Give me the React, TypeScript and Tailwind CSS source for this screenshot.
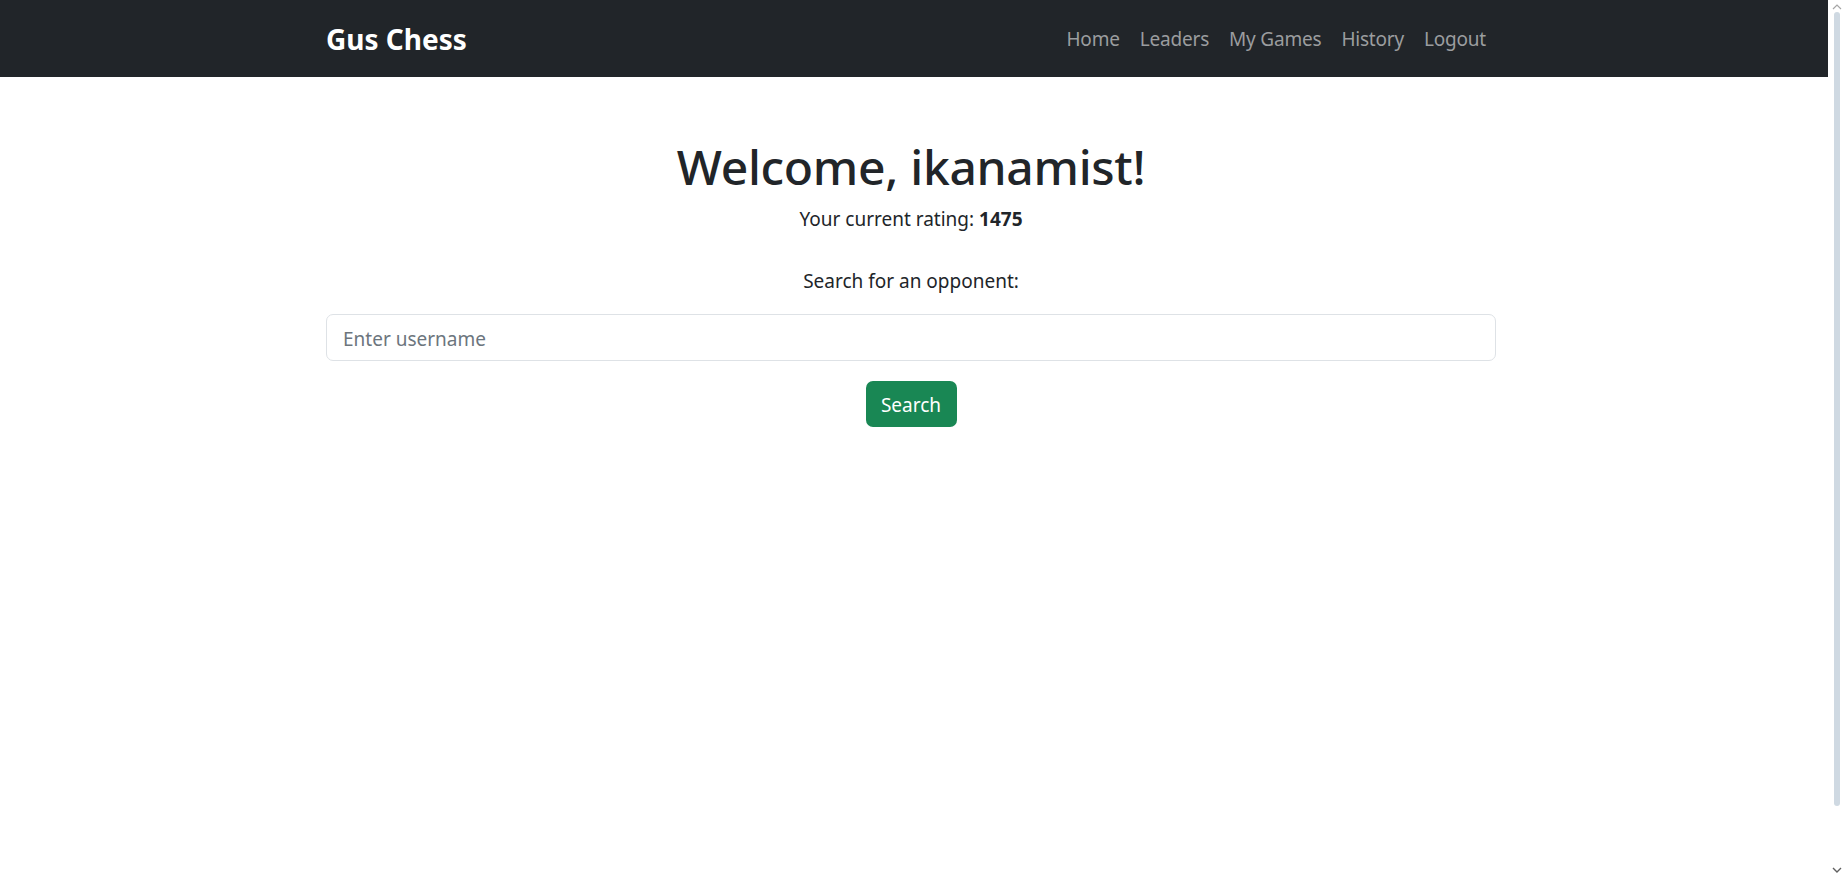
import React from "react";

const font = { fontFamily: '"Noto Sans", "Open Sans", Arial, sans-serif' };

export default function App() {
  const links = ["Home", "Leaders", "My Games", "History", "Logout"];
  return (
    <div className="flex h-[877px] w-[1846px] overflow-hidden bg-white" style={font}>
      <div className="flex-1 flex flex-col">
        <nav className="h-[77px] bg-[#212529] flex items-center">
          <div className="ml-[326px] w-[1170px] flex items-center justify-between">
            <span className="text-white font-bold text-[28px] leading-[32px]">Gus Chess</span>
            <ul className="flex items-center">
              {links.map((l) => (
                <li key={l} className="px-[10px] text-[19px] leading-[30px] text-[#9b9d9f] tracking-[-0.2px]">{l}</li>
              ))}
            </ul>
          </div>
        </nav>
        <main className="ml-[326px] w-[1170px] flex flex-col items-center text-[#212529]">
          <h1 className="mt-[60px] text-[48px] leading-[60px] font-medium tracking-[-0.3px]">Welcome, ikanamist!</h1>
          <p className="mt-[7px] text-[19px] leading-[30px]">
            Your current rating: <strong className="font-bold">1475</strong>
          </p>
          <p className="mt-[32px] text-[19px] leading-[30px]">Search for an opponent:</p>
          <div className="mt-[18px] w-full h-[47px] border border-[#dee2e6] rounded-[7px] flex items-center px-[16px] pt-[3px] text-[19px] text-[#6c757d]">
            Enter username
          </div>
          <button className="mt-[20px] h-[46px] w-[91px] rounded-[7px] bg-[#198754] text-white text-[19px] leading-[30px] pt-[1px]">
            Search
          </button>
        </main>
      </div>
      <div className="w-[18px] h-full bg-white flex flex-col items-center relative">
        <svg width="10" height="6" viewBox="0 0 10 6" className="mt-[4px]">
          <path d="M1 5 L5 1 L9 5" stroke="#a6a6a6" strokeWidth="1.2" fill="none" />
        </svg>
        <div className="mt-[2px] w-[6px] h-[794px] rounded-full bg-[#cfd9e2]" />
        <div className="flex-1" />
        <svg width="10" height="6" viewBox="0 0 10 6" className="mb-[4px]">
          <path d="M1 1 L5 5 L9 1" stroke="#606060" strokeWidth="1.4" fill="none" />
        </svg>
      </div>
    </div>
  );
}
